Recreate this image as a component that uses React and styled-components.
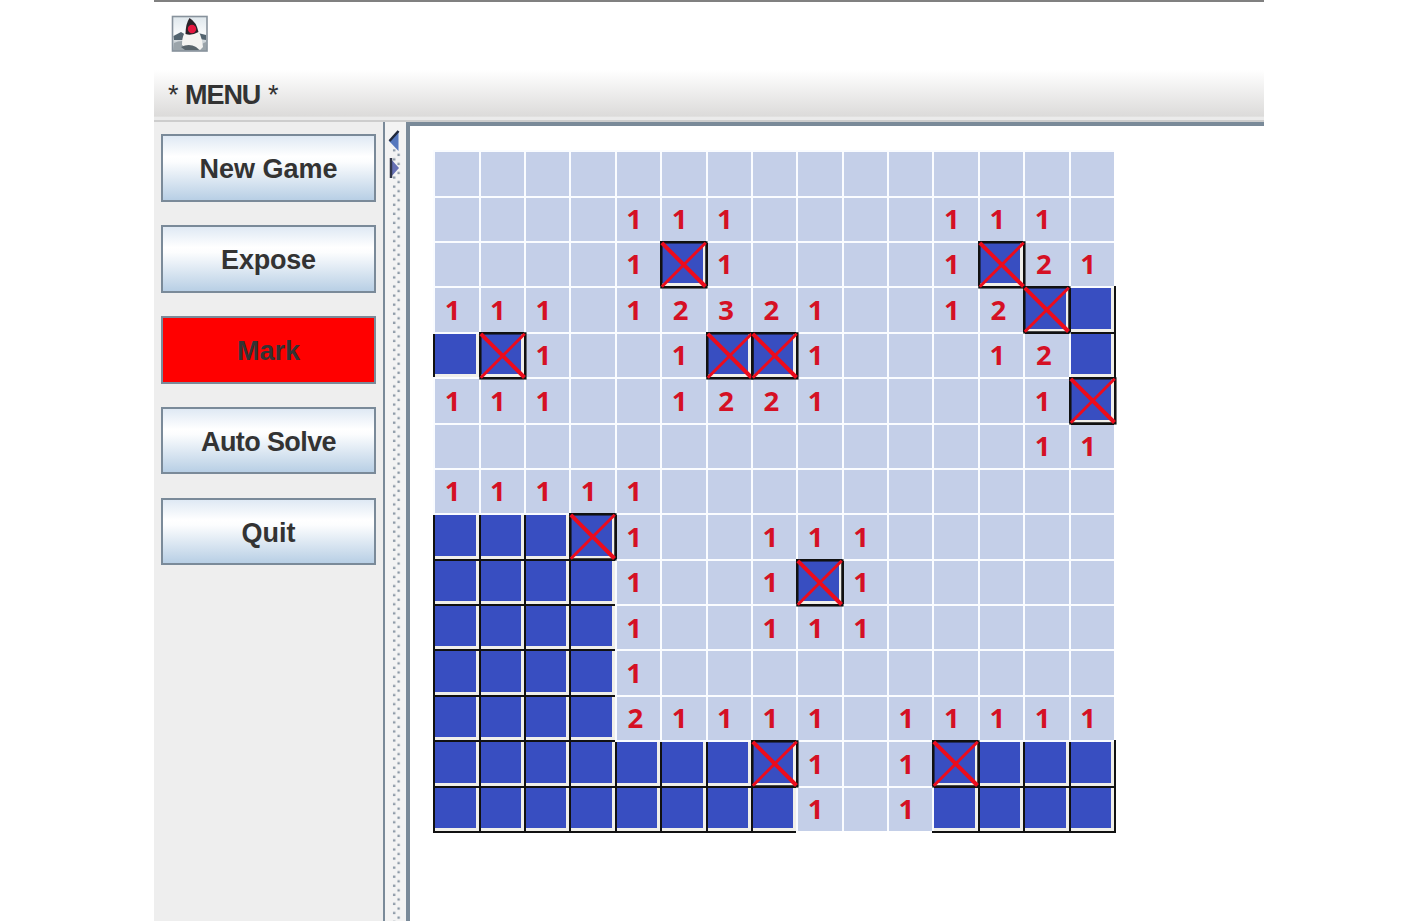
import React from "react";
import styled, { createGlobalStyle } from "styled-components";

const PITCH = 45.4;

const GlobalStyle = createGlobalStyle`
  * { box-sizing: border-box; }
  body { margin: 0; background: #fff; overflow: hidden; }
`;

const Window = styled.div`
  width: 1110px;
  height: 921px;
  margin-left: 154px;
  display: flex;
  flex-direction: column;
  overflow: hidden;
  background: #fff;
  border-top: 2px solid #808080;
  font-family: "Liberation Sans", Arial, sans-serif;
  font-weight: bold;
  color: #333;
`;

const TitleBar = styled.header`
  height: 68px;
  flex: none;
  padding: 13px 0 0 17px;
`;

const MenuBar = styled.nav`
  height: 52px;
  flex: none;
  padding: 10px 0 0 14px;
  font-size: 27px;
  line-height: 30px;
  letter-spacing: -1.1px;
  word-spacing: 1.3px;
  background: linear-gradient(#fff, #dcdbda 92%, #ebebeb 95%);
  border-bottom: 2px solid #cdcdcd;
`;

const Star = styled.span`
  font-weight: normal;
`;

const Body = styled.main`
  flex: 1;
  min-height: 0;
  display: flex;
`;

const Sidebar = styled.aside`
  width: 229px;
  flex: none;
  padding: 12px 0 0 7px;
  display: flex;
  flex-direction: column;
  gap: 23.1px;
  background: #eee;
`;

const SideButton = styled.button`
  width: 215px;
  height: 67.8px;
  flex: none;
  padding: 3px 0 0;
  border: 2px solid #7a8a99;
  font: bold 27px/30px "Liberation Sans", Arial, sans-serif;
  letter-spacing: ${(p) => p.$spacing || 0}px;
  color: #333;
  background: ${(p) =>
    p.$active ? "#f00" : "linear-gradient(#dfe9f4, #fff 32%, #fcfdfe 40%, #b8cfe5)"};
`;

const Divider = styled.div`
  width: 23px;
  flex: none;
  border-left: 2px solid #7a8a99;
  background: #f3f3f3;
`;

const BoardPane = styled.section`
  flex: 1;
  padding: 24.2px 0 0 23.2px;
  border: solid #7a8a99;
  border-width: 4px 0 0 4px;
  background: #fff;
`;

const Board = styled.div`
  display: grid;
  width: ${PITCH * 15}px;
  grid-template-columns: repeat(15, ${PITCH}px);
  grid-auto-rows: ${PITCH}px;
`;

const line = (on, size) =>
  `linear-gradient(${on ? "#111, #111" : "#fafcff, #fafcff"}) 0 0 / ${size} no-repeat`;

const cellBackground = ({ $hidden, $left, $top }) => {
  const l = line($left, "2px 100%");
  const t = line($top, "100% 2px");
  const fill = $hidden
    ? "linear-gradient(#384ec1, #384ec1) 2px 2px / calc(100% - 5px) calc(100% - 5px) no-repeat, #f0efea"
    : "#c4cfe8";
  return `${$left ? `${t}, ${l}` : `${l}, ${t}`}, ${fill}`;
};

const Cell = styled.div`
  position: relative;
  padding: 10.5px 0 0 ${(p) => (p.$wide ? 12.7 : 11.5)}px;
  font: bold 27.5px/26px "Open Sans", "Noto Sans", sans-serif;
  color: #d51024;
  background: ${cellBackground};
  box-shadow: ${(p) =>
    [p.$right && "2px 0 #111", p.$bottom && "0 2px #111", p.$right && p.$bottom && "2px 2px #111"]
      .filter(Boolean)
      .join(", ") || "none"};
`;

const Flag = styled.svg`
  position: absolute;
  z-index: 1;
  left: 0;
  top: 0;
  width: 48px;
  height: 48px;
`;

// "." open, "#" covered, "x" marked mine
const ROWS = [
  "...............",
  "....111....111.",
  "....1x1....1x21",
  "111.12321..12x#",
  "#x1..1xx1...12#",
  "111..1221....1x",
  ".............11",
  "11111..........",
  "###x1..111.....",
  "####1..1x1.....",
  "####1..111.....",
  "####1..........",
  "####21111.11111",
  "#######x1.1x###",
  "########1.1####",
];

const at = (r, c) => (ROWS[r] && ROWS[r][c]) || " ";

// A grid line is black around a marked cell, between covered cells, and where
// a covered cell meets the board's left, right or bottom side.
const edge = (a, b) => a === "x" || b === "x" || (/[# ]/.test(a) && /[# ]/.test(b) && a + b !== "  ");

function Marker() {
  return (
    <Flag viewBox="0 0 48 48" fill="none">
      <rect x="1.4" y="1.4" width="45" height="45" stroke="#111" strokeWidth="2.3" />
      <path d="M1.8 1.8 45.5 45.5" stroke="#ec0c1c" strokeWidth="4" />
      <path d="M45.7 1.8 1.8 45.7" stroke="#ec0c1c" strokeWidth="2.9" />
    </Flag>
  );
}

function JavaIcon() {
  return (
    <svg width="38" height="38" viewBox="0 0 38 38">
      <defs>
        <linearGradient id="sky" x1="0" y1="0" x2="0" y2="1">
          <stop offset="0" stopColor="#dfe7ec" />
          <stop offset=".5" stopColor="#f8fafb" />
          <stop offset="1" stopColor="#9ba6ae" />
        </linearGradient>
      </defs>
      <rect x="1.5" y="1.5" width="34.5" height="34.5" fill="url(#sky)" stroke="#87929c" strokeWidth="1.6" />
      <path d="M2.5 21 10 17l5 3-3 5-9 0zM27 18l8 2v5l-7-1z" fill="#53646f" />
      <path d="M3 28q8-4 16 0t16-1v8H3z" fill="#9ba4aa" />
      <path d="M13 19q7-4 15-2 3 6 4 15l-3 3q-7-6-15-3l-3-2q0-7 2-11z" fill="#f4f3f1" />
      <path d="M10 32q8-4 15 0l3 3H14z" fill="#59646b" />
      <path d="M18.5 3q7 4 9 14-7 4-13 2 0-10 4-16z" fill="#292329" />
      <circle cx="21" cy="14" r="4.2" fill="#e5173f" />
    </svg>
  );
}

function DividerArt() {
  return (
    <svg width="21" height="800" viewBox="0 0 21 800" style={{ display: "block" }}>
      <defs>
        <pattern id="bumps" width="9.08" height="9.08" patternUnits="userSpaceOnUse" x="7" y="4">
          <rect x="1" y="5" width="2.3" height="2.3" fill="#8795a3" />
          <rect x="5.5" y=".5" width="2.3" height="2.3" fill="#8795a3" />
        </pattern>
      </defs>
      <rect x="7" y="27" width="9.08" height="773" fill="url(#bumps)" />
      <path d="M13.5 9v20L4 19z" fill="#5577bd" />
      <path d="M13.5 9 4.5 19" stroke="#20283b" strokeWidth="2.5" />
      <path d="M5 36v20l9-10z" fill="#6670b5" />
      <path d="M6 36v20" stroke="#303548" strokeWidth="2.5" />
    </svg>
  );
}

export default function App() {
  return (
    <>
      <GlobalStyle />
      <Window>
        <TitleBar>
          <JavaIcon />
        </TitleBar>
        <MenuBar>
          <Star>*</Star> MENU <Star>*</Star>
        </MenuBar>
        <Body>
          <Sidebar>
            <SideButton>New Game</SideButton>
            <SideButton $spacing={-0.2}>Expose</SideButton>
            <SideButton $active>Mark</SideButton>
            <SideButton $spacing={-0.6}>Auto Solve</SideButton>
            <SideButton>Quit</SideButton>
          </Sidebar>
          <Divider>
            <DividerArt />
          </Divider>
          <BoardPane>
            <Board>
              {ROWS.flatMap((row, r) =>
                [...row].map((v, c) => (
                  <Cell
                    key={`${r}-${c}`}
                    $hidden={v === "#" || v === "x"}
                    $wide={v === "2" || v === "3"}
                    $left={edge(v, at(r, c - 1))}
                    $top={edge(v, at(r - 1, c))}
                    $right={c === 14 && edge(v, " ")}
                    $bottom={r === 14 && edge(v, " ")}
                  >
                    {/\d/.test(v) && v}
                    {v === "x" && <Marker />}
                  </Cell>
                ))
              )}
            </Board>
          </BoardPane>
        </Body>
      </Window>
    </>
  );
}
